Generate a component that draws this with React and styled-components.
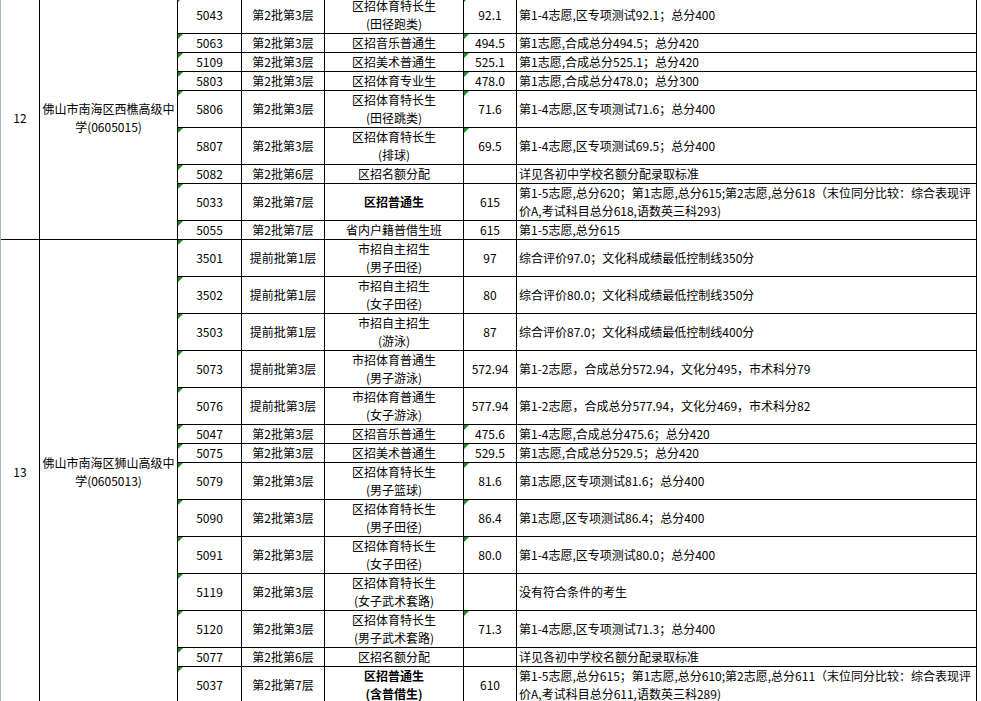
import React from "react";
import styled, { createGlobalStyle } from "styled-components";

const GlobalStyle = createGlobalStyle`
  html, body { margin: 0; padding: 0; background: #fff; }
  body { font-family: "Noto Sans CJK SC", "Noto Sans", sans-serif; }
`;

const Sheet = styled.div`
  width: 981px;
  height: 701px;
  overflow: hidden;
  background: #fff;
  border-left: 1px solid #a7b3cd;
  box-sizing: border-box;
`;

const Table = styled.table`
  border-collapse: separate;
  border-spacing: 0;
  table-layout: fixed;
  width: 976px;
  margin-top: -3px;
  font-size: 12px;
  line-height: 18px;
  color: #000;
`;

const Row = styled.tr`
  height: 19px;
`;

const Cell = styled.td`
  box-sizing: border-box;
  padding: 0 ${(p) => (p.$align === "left" ? "2px" : "0")};
  border-right: 1px solid #000;
  border-bottom: 1px solid #000;
  text-align: ${(p) => p.$align || "center"};
  vertical-align: middle;
  position: relative;
  font-weight: ${(p) => (p.$bold ? 700 : 400)};
  &::before {
    content: "";
    display: ${(p) => (p.$flag ? "block" : "none")};
    position: absolute;
    top: 0;
    left: 0;
    width: 0;
    height: 0;
    border-top: 5px solid #1f8b24;
    border-right: 5px solid transparent;
  }
`;

const Line = styled.span`
  display: block;
`;

const groups = [
  {
    no: "12",
    school: "佛山市南海区西樵高级中学(0605015)",
    rows: [
      ["5043", "第2批第3层", ["区招体育特长生", "(田径跑类)"], "92.1", "第1-4志愿,区专项测试92.1；总分400", true],
      ["5063", "第2批第3层", ["区招音乐普通生"], "494.5", "第1志愿,合成总分494.5；总分420", true],
      ["5109", "第2批第3层", ["区招美术普通生"], "525.1", "第1志愿,合成总分525.1；总分420", true],
      ["5803", "第2批第3层", ["区招体育专业生"], "478.0", "第1志愿,合成总分478.0；总分300", true],
      ["5806", "第2批第3层", ["区招体育特长生", "(田径跳类)"], "71.6", "第1-4志愿,区专项测试71.6；总分400", true],
      ["5807", "第2批第3层", ["区招体育特长生", "(排球)"], "69.5", "第1-4志愿,区专项测试69.5；总分400", true],
      ["5082", "第2批第6层", ["区招名额分配"], "", "详见各初中学校名额分配录取标准", false],
      ["5033", "第2批第7层", ["区招普通生"], "615", "第1-5志愿,总分620；第1志愿,总分615;第2志愿,总分618（末位同分比较：综合表现评价A,考试科目总分618,语数英三科293)", false, true],
      ["5055", "第2批第7层", ["省内户籍普借生班"], "615", "第1-5志愿,总分615", false],
    ],
  },
  {
    no: "13",
    school: "佛山市南海区狮山高级中学(0605013)",
    rows: [
      ["3501", "提前批第1层", ["市招自主招生", "(男子田径)"], "97", "综合评价97.0；文化科成绩最低控制线350分", false],
      ["3502", "提前批第1层", ["市招自主招生", "(女子田径)"], "80", "综合评价80.0；文化科成绩最低控制线350分", false],
      ["3503", "提前批第1层", ["市招自主招生", "(游泳)"], "87", "综合评价87.0；文化科成绩最低控制线400分", false],
      ["5073", "提前批第3层", ["市招体育普通生", "(男子游泳)"], "572.94", "第1-2志愿，合成总分572.94，文化分495，市术科分79", false],
      ["5076", "提前批第3层", ["市招体育普通生", "(女子游泳)"], "577.94", "第1-2志愿，合成总分577.94，文化分469，市术科分82", false],
      ["5047", "第2批第3层", ["区招音乐普通生"], "475.6", "第1-4志愿,合成总分475.6；总分420", true],
      ["5075", "第2批第3层", ["区招美术普通生"], "529.5", "第1志愿,合成总分529.5；总分420", true],
      ["5079", "第2批第3层", ["区招体育特长生", "(男子篮球)"], "81.6", "第1志愿,区专项测试81.6；总分400", true],
      ["5090", "第2批第3层", ["区招体育特长生", "(男子田径)"], "86.4", "第1志愿,区专项测试86.4；总分400", true],
      ["5091", "第2批第3层", ["区招体育特长生", "(女子田径)"], "80.0", "第1-4志愿,区专项测试80.0；总分400", true],
      ["5119", "第2批第3层", ["区招体育特长生", "(女子武术套路)"], "", "没有符合条件的考生", false],
      ["5120", "第2批第3层", ["区招体育特长生", "(男子武术套路)"], "71.3", "第1-4志愿,区专项测试71.3；总分400", true],
      ["5077", "第2批第6层", ["区招名额分配"], "", "详见各初中学校名额分配录取标准", false],
      ["5037", "第2批第7层", ["区招普通生", "(含普借生)"], "610", "第1-5志愿,总分615；第1志愿,总分610;第2志愿,总分611（末位同分比较：综合表现评价A,考试科目总分611,语数英三科289)", false, true],
    ],
  },
];

const widths = [39, 138, 64, 83, 139, 53, 460];

export default function App() {
  return (
    <>
      <GlobalStyle />
      <Sheet>
        <Table>
          <colgroup>
            {widths.map((w, i) => (
              <col key={i} style={{ width: w }} />
            ))}
          </colgroup>
          <tbody>
            {groups.map((g) =>
              g.rows.map(([code, batch, cat, score, note, flag, bold], i) => (
                <Row key={g.no + code}>
                  {i === 0 && (
                    <>
                      <Cell rowSpan={g.rows.length}>{g.no}</Cell>
                      <Cell rowSpan={g.rows.length}>{g.school}</Cell>
                    </>
                  )}
                  <Cell $flag>{code}</Cell>
                  <Cell>{batch}</Cell>
                  <Cell $bold={bold}>
                    {cat.map((c) => (
                      <Line key={c}>{c}</Line>
                    ))}
                  </Cell>
                  <Cell $flag={flag}>{score}</Cell>
                  <Cell $align="left">{note}</Cell>
                </Row>
              ))
            )}
          </tbody>
        </Table>
      </Sheet>
    </>
  );
}
